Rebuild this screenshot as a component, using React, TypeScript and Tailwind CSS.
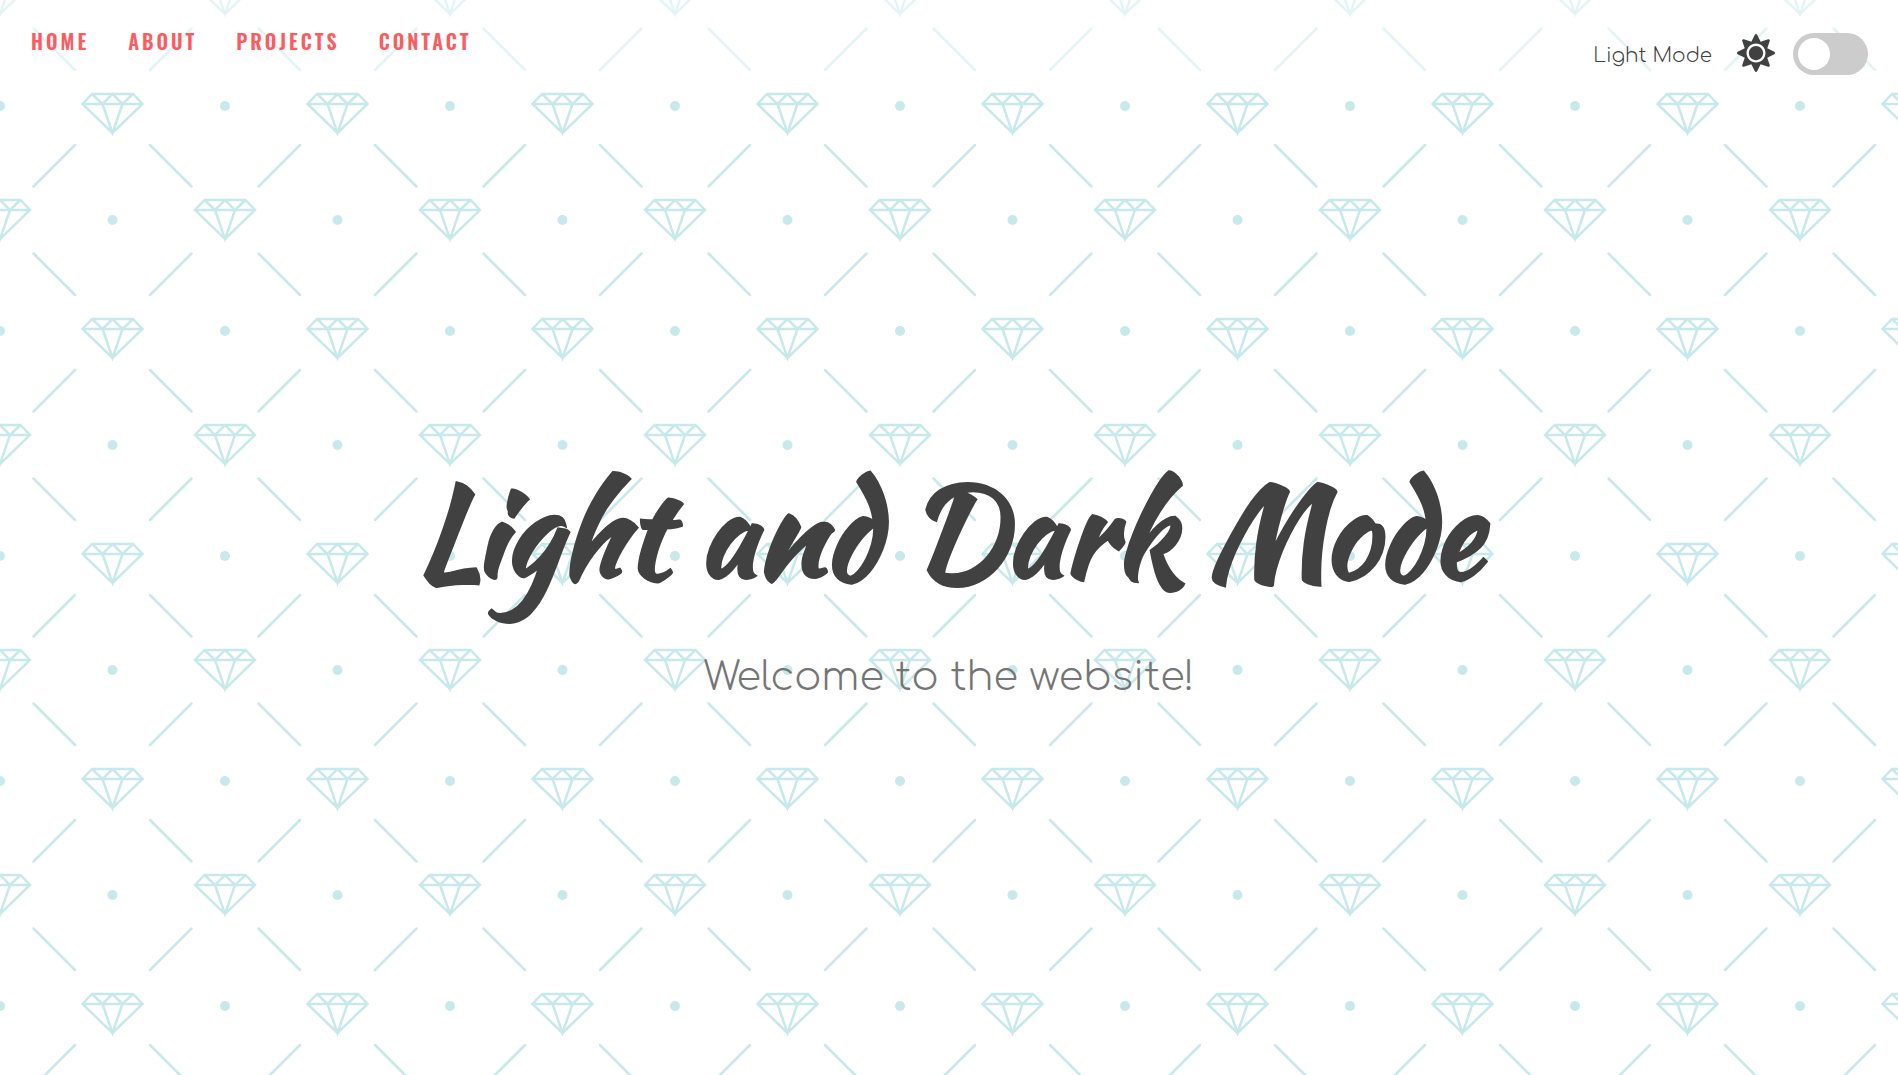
import { useState } from "react";
import { FaMoon, FaSun } from "react-icons/fa";

const links = ["Home", "About", "Projects", "Contact"];

function DiamondShape() {
  return (
    <path d="M-20.5 1H20.5L30 11L0 40L-30 11ZM-30 11H30M-20.5 1L-10 11L0 1L10 11L20.5 1M-10 11L0 40L10 11" />
  );
}

function DiamondBackdrop() {
  return (
    <svg aria-hidden="true" className="absolute inset-0 h-full w-full text-[#c8e9ec]">
      <defs>
        <pattern id="diamonds" width="225" height="225" patternUnits="userSpaceOnUse">
          <g fill="none" stroke="currentColor" strokeWidth="2.5" strokeLinejoin="miter">
            <g transform="translate(112.5 93)"><DiamondShape /></g>
            <g transform="translate(0 199)"><DiamondShape /></g>
            <g transform="translate(225 199)"><DiamondShape /></g>
            <g transform="translate(0 -26)"><DiamondShape /></g>
            <g transform="translate(225 -26)"><DiamondShape /></g>
            <path
              strokeLinecap="round"
              d="M75 145L33.5 186.500M150 145L191.500 186.500M33.500 28.500L75 70M191.500 28.500L150 70"
            />
          </g>
          <g fill="currentColor">
            <circle cx="0" cy="106" r="5" />
            <circle cx="225" cy="106" r="5" />
            <circle cx="112.5" cy="220" r="5" />
            <circle cx="112.5" cy="-5" r="5" />
          </g>
        </pattern>
      </defs>
      <rect width="100%" height="100%" fill="url(#diamonds)" />
    </svg>
  );
}

export default function App() {
  const [dark, setDark] = useState(false);
  return (
    <div className="relative flex min-h-screen flex-col bg-white text-[#414141]">
      <DiamondBackdrop />
      <header className="relative flex h-20 items-start justify-between bg-white/50 pr-[30px] pl-[31px]">
        <nav className="flex gap-[39px] pt-[27px] font-['Oswald',sans-serif] text-xl leading-7 font-semibold tracking-[3px] text-[#fa5c5f]">
          {links.map((link) => (
            <a key={link} href={"#" + link.toLowerCase()} className="uppercase">
              {link}
            </a>
          ))}
        </nav>
        <div className="flex items-center pt-[33px] font-['Comfortaa',sans-serif]">
          <label htmlFor="theme" className="mr-[25px] pt-1 text-xl leading-8 font-light">
            {dark ? "Dark Mode" : "Light Mode"}
          </label>
          {dark ? <FaMoon className="mr-[18px] mb-0.5 size-[38px]" /> : <FaSun className="mr-[18px] mb-0.5 size-[38px]" />}
          <input
            id="theme"
            type="checkbox"
            checked={dark}
            onChange={(e) => setDark(e.target.checked)}
            className="h-[42px] w-[75px] cursor-pointer appearance-none rounded-full bg-[#ccc] p-[5px] before:block before:size-8 before:rounded-full before:bg-white checked:bg-[#f95959] checked:before:ml-[33px]"
          />
        </div>
      </header>
      <main className="relative flex flex-1 flex-col items-center justify-center pb-3.5 text-center">
        <h1 className="font-['Kaushan_Script',cursive] text-[125px] leading-[180px] font-bold">
          Light and Dark Mode
        </h1>
        <p className="mt-8 font-['Comfortaa',sans-serif] text-[40px] leading-[48px] font-light text-[#757575]">
          Welcome to the website!
        </p>
      </main>
    </div>
  );
}
